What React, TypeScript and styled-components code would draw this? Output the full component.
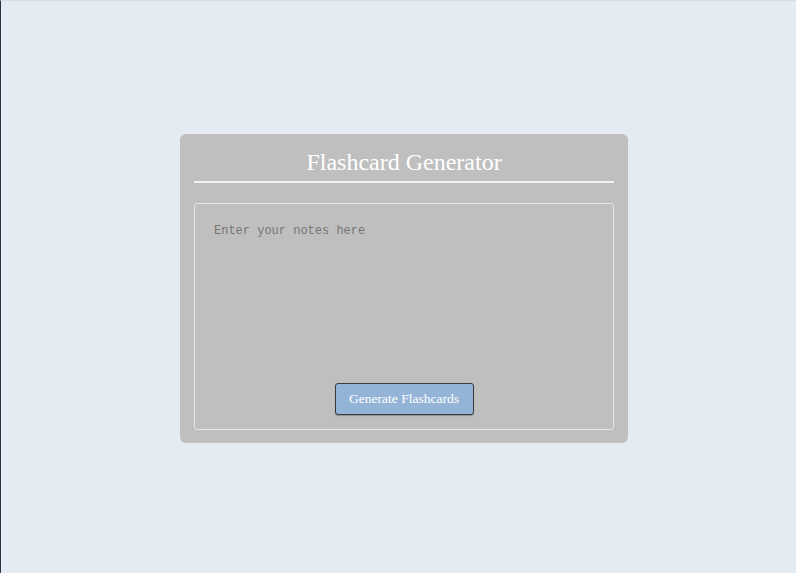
import React from "react";
import styled, { createGlobalStyle } from "styled-components";

const GlobalStyle = createGlobalStyle`
  html, body {
    margin: 0;
    padding: 0;
    height: 100%;
  }
  body {
    background: #e4ebf3;
    font-family: "Liberation Serif", "Times New Roman", serif;
  }
  #root {
    height: 100%;
  }
`;

const Page = styled.div`
  box-sizing: border-box;
  height: 573px;
  border-left: 1px solid #2b3245;
  border-top: 1px solid #d6dde6;
  display: flex;
  align-items: flex-start;
  justify-content: center;
  padding: 133px 1px 0 12px;
`;

const Card = styled.main`
  box-sizing: border-box;
  width: 448px;
  height: 309px;
  background: #bfbfbf;
  border-radius: 6px;
  padding: 14px 14px 13px;
  display: flex;
  flex-direction: column;
`;

const Title = styled.h1`
  margin: 0;
  font-family: "Liberation Serif", "Times New Roman", serif;
  font-weight: normal;
  font-size: 24px;
  line-height: 28px;
  color: #ffffff;
  text-align: center;
  padding-bottom: 5px;
  border-bottom: 2px solid #f2f2f2;
`;

const Editor = styled.form`
  margin-top: 20px;
  flex: 1;
  border: 1px solid #e6e6e6;
  border-radius: 3px;
  display: flex;
  flex-direction: column;
  align-items: center;
  padding-bottom: 14px;
`;

const Notes = styled.textarea`
  box-sizing: border-box;
  align-self: stretch;
  flex: 1;
  background: transparent;
  border: none;
  outline: none;
  resize: none;
  padding: 20px 19px;
  font-family: "Liberation Mono", "Courier New", monospace;
  font-size: 12px;
  color: #333;

  &::placeholder {
    color: #767676;
  }
`;

const GenerateButton = styled.button`
  box-sizing: border-box;
  width: 139px;
  height: 32px;
  background: #94b4d7;
  border: 1px solid #3a3a3a;
  border-radius: 3px;
  box-shadow: 0 1px 1px rgba(0, 0, 0, 0.25);
  color: #ffffff;
  font-family: "Liberation Serif", "Times New Roman", serif;
  font-size: 13.5px;
  cursor: pointer;
`;

export default function App() {
  return (
    <>
      <GlobalStyle />
      <Page>
        <Card>
          <Title>Flashcard Generator</Title>
          <Editor onSubmit={(e) => e.preventDefault()}>
            <Notes placeholder="Enter your notes here" />
            <GenerateButton type="submit">Generate Flashcards</GenerateButton>
          </Editor>
        </Card>
      </Page>
    </>
  );
}
